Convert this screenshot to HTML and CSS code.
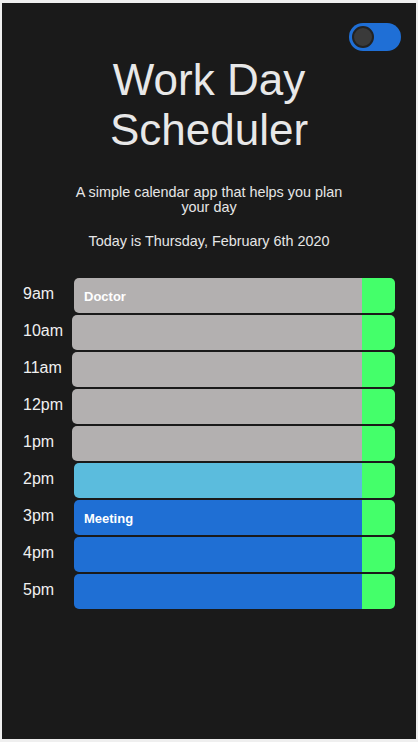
FILE: index.html
```html
<!DOCTYPE html>
<html>
<head>
<meta charset="utf-8">
<link rel="stylesheet" href="styles.css">
</head>
<body>
<div class="app">
  <div class="topbar">
    <div class="toggle"><span class="knob"></span></div>
  </div>
  <header class="header">
    <h1 class="title">Work Day Scheduler</h1>
    <p class="lead">A simple calendar app that helps you plan your day</p>
    <p class="today">Today is Thursday, February 6th 2020</p>
  </header>
  <div class="schedule">
    <div class="row"><div class="hour">9am</div><div class="task past">Doctor</div><div class="save"></div></div>
    <div class="row"><div class="hour">10am</div><div class="task past shift"></div><div class="save"></div></div>
    <div class="row"><div class="hour">11am</div><div class="task past shift"></div><div class="save"></div></div>
    <div class="row"><div class="hour">12pm</div><div class="task past shift"></div><div class="save"></div></div>
    <div class="row"><div class="hour">1pm</div><div class="task past shift"></div><div class="save"></div></div>
    <div class="row"><div class="hour">2pm</div><div class="task present"></div><div class="save"></div></div>
    <div class="row"><div class="hour">3pm</div><div class="task future">Meeting</div><div class="save"></div></div>
    <div class="row"><div class="hour">4pm</div><div class="task future"></div><div class="save"></div></div>
    <div class="row"><div class="hour">5pm</div><div class="task future"></div><div class="save"></div></div>
  </div>
</div>
</body>
</html>
```
FILE: styles.css
```css
html, body {
  margin: 0;
  padding: 0;
  background: #efefef;
}
body {
  padding: 3px 2px;
  font-family: "Liberation Sans", Arial, sans-serif;
}
.app {
  background: #1a1a1a;
  height: 736px;
  color: #e6e6e6;
}
.topbar {
  display: flex;
  justify-content: flex-end;
  padding: 20px 15px 0 0;
}
.toggle {
  width: 52px;
  height: 28px;
  border-radius: 14px;
  background: #1f6fd6;
  display: flex;
  align-items: center;
  padding-left: 3px;
  box-sizing: border-box;
}
.knob {
  width: 22px;
  height: 22px;
  border-radius: 50%;
  background: #3a3a3a;
  box-sizing: border-box;
  border: 2px solid #222;
}
.header {
  text-align: center;
}
.title {
  margin: 4px auto 0;
  font-size: 44px;
  font-weight: normal;
  line-height: 50px;
  color: #e8e8e8;
  width: 260px;
}
.lead {
  margin: 30px auto 0;
  width: 290px;
  font-size: 14.4px;
  line-height: 15px;
}
.today {
  margin: 18px 0 0;
  font-size: 14.4px;
  line-height: 16px;
}
.schedule {
  margin-top: 29px;
  padding: 0 21px;
  display: flex;
  flex-direction: column;
  gap: 2px;
}
.row {
  display: flex;
  height: 35px;
}
.hour {
  width: 51px;
  font-size: 16px;
  padding-top: 7px;
  box-sizing: border-box;
  color: #f0f0f0;
}
.task {
  flex: 1;
  border-radius: 5px 0 0 5px;
  font-size: 13px;
  font-weight: bold;
  color: #fff;
  padding: 11px 0 0 10px;
  box-sizing: border-box;
}
.task.shift {
  margin-left: -2px;
}
.past { background: #b3b0b0; }
.present { background: #5bbcdd; }
.future { background: #1f6fd4; }
.save {
  width: 33px;
  background: #44ff6a;
  border-radius: 0 5px 5px 0;
}
```
